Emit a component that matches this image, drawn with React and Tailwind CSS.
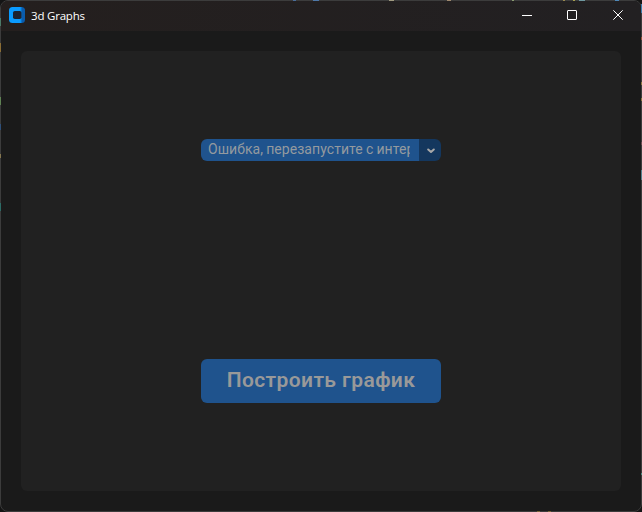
const edgeSpecks = [
  'left-0 top-[18px] h-[8px] w-px bg-[#4c7a68]',
  'left-0 top-[43px] h-[9px] w-px bg-[#8a6d35]',
  'left-0 top-[97px] h-[8px] w-px bg-[#5f8253]',
  'left-0 top-[124px] h-[6px] w-px bg-[#2f4f78]',
  'left-0 top-[154px] h-[4px] w-px bg-[#857650]',
  'left-0 top-[203px] h-[8px] w-px bg-[#2c6b66]',
  'left-[293px] top-0 h-px w-[3px] bg-[#4a6d9a]',
  'left-[313px] top-0 h-px w-[6px] bg-[#4f78a8]',
  'left-[389px] top-0 h-px w-[5px] bg-[#a09a80]',
  'left-[447px] top-0 h-px w-[4px] bg-[#a08a70]',
  'left-[512px] top-0 h-px w-[2px] bg-[#8a9a70]',
  'left-[563px] top-0 h-px w-[2px] bg-[#9a8a50]',
  'left-[573px] top-0 h-px w-[2px] bg-[#a8a050]',
  'left-[579px] top-0 h-px w-[6px] bg-[#6f98a0]',
  'left-[615px] top-0 h-px w-[4px] bg-[#4f88b8]',
  'left-[641px] top-[4px] h-[9px] w-px bg-[#3d7fae]',
  'left-[641px] top-[37px] h-[3px] w-px bg-[#95503a]',
  'left-[641px] top-[82px] h-[3px] w-px bg-[#8a7640]',
  'left-[641px] top-[98px] h-[3px] w-px bg-[#8a7640]',
  'left-[641px] top-[142px] h-[3px] w-px bg-[#6a4a50]',
  'left-[641px] top-[170px] h-[10px] w-px bg-[#55808c]',
  'left-[641px] top-[473px] h-[2px] w-px bg-[#4a8a80]',
  'left-[537px] top-[511px] h-px w-[3px] bg-[#7a6538]',
  'left-[548px] top-[511px] h-px w-[3px] bg-[#7a6538]',
];

function AppIcon() {
  return (
    <svg width="16" height="16" viewBox="0 0 16 16" className="shrink-0">
      <defs>
        <linearGradient id="rim" x1="0" x2="1" y1="0" y2="0">
          <stop offset="0.7" stopColor="#0a9bff" />
          <stop offset="0.82" stopColor="#0a5cad" />
        </linearGradient>
      </defs>
      <rect width="16" height="16" rx="3.5" fill="url(#rim)" />
      <rect x="4" y="4" width="8.5" height="8" rx="1.8" fill="#1c2230" />
    </svg>
  );
}

function TitleBar() {
  return (
    <header className="flex h-[30px] shrink-0 items-center bg-linear-to-r from-[#241f1e] to-[#222022] pb-[2px] pl-2">
      <AppIcon />
      <h1 className="ml-1.5 flex-1 pt-[2px] font-['Open_Sans','Noto_Sans',sans-serif] text-[11.5px] leading-4 font-medium tracking-[-0.2px] text-white">
        3d Graphs
      </h1>
      <div className="flex h-full text-white">
        <button aria-label="Minimize" className="flex w-[45px] items-center justify-center">
          <svg width="10" height="10" viewBox="0 0 10 10"><path d="M0 5.5H10" stroke="currentColor" /></svg>
        </button>
        <button aria-label="Maximize" className="flex w-[45px] items-center justify-center">
          <svg width="10" height="10" viewBox="0 0 10 10"><rect x="0.5" y="0.5" width="9" height="9" rx="0.5" fill="none" stroke="currentColor" /></svg>
        </button>
        <button aria-label="Close" className="flex w-[47px] items-center justify-center pl-px">
          <svg width="10" height="10" viewBox="0 0 10 10"><path d="M0.3 0.3L9.7 9.7M9.7 0.3L0.3 9.7" stroke="currentColor" /></svg>
        </button>
      </div>
    </header>
  );
}

export default function App() {
  return (
    <div className="relative h-[512px] w-[642px] overflow-hidden bg-[#141414] font-[Roboto,sans-serif]">
      <div className="flex h-full flex-col overflow-hidden rounded-lg border border-[#3c3c3c] bg-[#1a1a1a]">
        <TitleBar />
        <main className="flex-1 p-5">
          <section className="flex h-[440px] flex-col items-center rounded-md bg-[#212121] pt-[88px]">
            <div className="flex h-[22px] w-[240px] overflow-hidden rounded-md">
              <div className="w-[218px] bg-[#1f538d] pl-[7px]">
                <div className="w-[202px] overflow-hidden whitespace-nowrap text-[14px] leading-[21px] tracking-[0.06px] [word-spacing:-0.4px] text-[#949a9f]">
                  Ошибка, перезапустите с интернетом
                </div>
              </div>
              <button aria-label="Open list" className="flex flex-1 items-center justify-center bg-[#14375e]">
                <svg width="8" height="6" viewBox="0 0 8 6" className="mt-[2px] ml-px">
                  <path d="M1.2 1.5L4 4L6.8 1.5" fill="none" stroke="#a8a8a8" strokeWidth="2" strokeLinecap="round" strokeLinejoin="round" />
                </svg>
              </button>
            </div>
            <button className="mt-[198px] h-[44px] w-[240px] rounded-md bg-[#1f538d] text-[21px] font-semibold tracking-[0.4px] text-[#999999]">
              Построить график
            </button>
          </section>
        </main>
      </div>
      {edgeSpecks.map((place) => (
        <span key={place} className={`absolute ${place}`} />
      ))}
    </div>
  );
}
